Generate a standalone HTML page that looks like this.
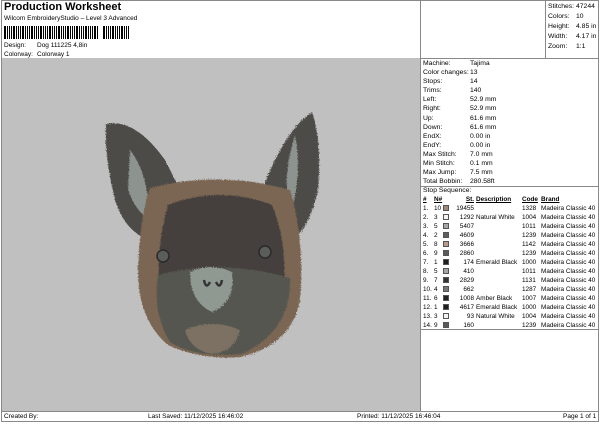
<!DOCTYPE html>
<html><head><meta charset="utf-8"><style>
*{margin:0;padding:0;box-sizing:border-box}
body{width:600px;height:424px;background:#fff;font-family:"Liberation Sans",Arial,sans-serif;font-size:7px;color:#000;position:relative;overflow:hidden}
.a{position:absolute;white-space:nowrap}
.ln{position:absolute;background:#888}
table{table-layout:fixed;border-collapse:collapse}
td{font-size:6.4px;padding:0;height:9px;line-height:9px;white-space:nowrap;overflow:hidden}
.sw{display:inline-block;width:6px;height:6px;border:1px solid #555;vertical-align:-1px}
</style></head><body>
<div class="ln" style="left:1px;top:0;width:598px;height:1px"></div>
<div class="ln" style="left:1px;top:0;width:1px;height:422px"></div>
<div class="ln" style="left:598px;top:0;width:1px;height:422px"></div>
<div class="ln" style="left:1px;top:421px;width:598px;height:1px"></div>
<div class="a" style="left:4px;top:1px;font-size:11px;font-weight:bold">Production Worksheet</div>
<div class="a" style="left:4px;top:15px;font-size:6.5px">Wilcom EmbroideryStudio – Level 3 Advanced</div>
<div class="a" style="left:4px;top:26px;width:126px;height:13px;background:repeating-linear-gradient(90deg,#000 0 2px,#fff 2px 3px,#000 3px 4px,#fff 4px 5px,#000 5px 6px,#fff 6px 7px,#000 7px 8px,#fff 8px 9px)"></div>
<div class="a" style="left:99px;top:26px;width:4px;height:13px;background:#fff"></div>
<div class="a" style="left:4px;top:42px;font-size:6.5px">Design:</div>
<div class="a" style="left:37px;top:42px;font-size:6.5px">Dog 111225 4,8in</div>
<div class="a" style="left:4px;top:51px;font-size:6.5px">Colorway:</div>
<div class="a" style="left:37px;top:51px;font-size:6.5px">Colorway 1</div>
<div class="a" style="left:2px;top:58px;width:418px;height:353px;background:#c0c0c0"></div>
<div class="ln" style="left:420px;top:0;width:1px;height:412px"></div>
<div class="ln" style="left:545px;top:0;width:1px;height:58px"></div>
<div class="ln" style="left:420px;top:58px;width:179px;height:1px"></div>
<div class="ln" style="left:420px;top:186px;width:179px;height:1px"></div>
<div class="ln" style="left:420px;top:329px;width:179px;height:1px"></div>
<div class="ln" style="left:1px;top:411px;width:598px;height:1px"></div>
<div class="a" style="left:548px;top:2px;line-height:10px;font-size:6.8px">Stitches:<br>Colors:<br>Height:<br>Width:<br>Zoom:</div>
<div class="a" style="left:576px;top:2px;line-height:10px;font-size:6.8px">47244<br>10<br>4.85 in<br>4.17 in<br>1:1</div>
<div class="a" style="left:423px;top:59px;line-height:9.1px;font-size:6.8px">Machine:<br>Color changes:<br>Stops:<br>Trims:<br>Left:<br>Right:<br>Up:<br>Down:<br>EndX:<br>EndY:<br>Max Stitch:<br>Min Stitch:<br>Max Jump:<br>Total Bobbin:</div>
<div class="a" style="left:470px;top:59px;line-height:9.1px;font-size:6.8px">Tajima<br>13<br>14<br>140<br>52.9 mm<br>52.9 mm<br>61.6 mm<br>61.6 mm<br>0.00 in<br>0.00 in<br>7.0 mm<br>0.1 mm<br>7.5 mm<br>280.58ft</div>
<div class="a" style="left:423px;top:187px;font-size:6.8px">Stop Sequence:</div>
<table class="a" style="left:423px;top:195px;width:175px">
<colgroup><col style="width:11px"><col style="width:9px"><col style="width:9px"><col style="width:22px"><col style="width:48px"><col style="width:19px"><col style="width:57px"></colgroup>
<tr style="font-weight:bold;text-decoration:underline"><td>#</td><td>N#</td><td></td><td style="text-align:right">St.</td><td style="padding-left:2px">Description</td><td>Code</td><td>Brand</td></tr>
<tr><td>1.</td><td>10</td><td><span class="sw" style="background:#a0897a"></span></td><td style="text-align:right">19455</td><td></td><td>1328</td><td>Madeira Classic 40</td></tr>
<tr><td>2.</td><td>3</td><td><span class="sw" style="background:#f4f4f4"></span></td><td style="text-align:right">1292</td><td style="padding-left:2px">Natural White</td><td>1004</td><td>Madeira Classic 40</td></tr>
<tr><td>3.</td><td>5</td><td><span class="sw" style="background:#a4a7a6"></span></td><td style="text-align:right">5407</td><td></td><td>1011</td><td>Madeira Classic 40</td></tr>
<tr><td>4.</td><td>2</td><td><span class="sw" style="background:#5e5e5e"></span></td><td style="text-align:right">4609</td><td></td><td>1239</td><td>Madeira Classic 40</td></tr>
<tr><td>5.</td><td>8</td><td><span class="sw" style="background:#b89b88"></span></td><td style="text-align:right">3666</td><td></td><td>1142</td><td>Madeira Classic 40</td></tr>
<tr><td>6.</td><td>9</td><td><span class="sw" style="background:#5a5a5a"></span></td><td style="text-align:right">2860</td><td></td><td>1239</td><td>Madeira Classic 40</td></tr>
<tr><td>7.</td><td>1</td><td><span class="sw" style="background:#1e1e1e"></span></td><td style="text-align:right">174</td><td style="padding-left:2px">Emerald Black</td><td>1000</td><td>Madeira Classic 40</td></tr>
<tr><td>8.</td><td>5</td><td><span class="sw" style="background:#a4a7a6"></span></td><td style="text-align:right">410</td><td></td><td>1011</td><td>Madeira Classic 40</td></tr>
<tr><td>9.</td><td>7</td><td><span class="sw" style="background:#3a3330"></span></td><td style="text-align:right">2829</td><td></td><td>1131</td><td>Madeira Classic 40</td></tr>
<tr><td>10.</td><td>4</td><td><span class="sw" style="background:#777"></span></td><td style="text-align:right">662</td><td></td><td>1287</td><td>Madeira Classic 40</td></tr>
<tr><td>11.</td><td>6</td><td><span class="sw" style="background:#222"></span></td><td style="text-align:right">1008</td><td style="padding-left:2px">Amber Black</td><td>1007</td><td>Madeira Classic 40</td></tr>
<tr><td>12.</td><td>1</td><td><span class="sw" style="background:#1e1e1e"></span></td><td style="text-align:right">4617</td><td style="padding-left:2px">Emerald Black</td><td>1000</td><td>Madeira Classic 40</td></tr>
<tr><td>13.</td><td>3</td><td><span class="sw" style="background:#f4f4f4"></span></td><td style="text-align:right">93</td><td style="padding-left:2px">Natural White</td><td>1004</td><td>Madeira Classic 40</td></tr>
<tr><td>14.</td><td>9</td><td><span class="sw" style="background:#5a5a5a"></span></td><td style="text-align:right">160</td><td></td><td>1239</td><td>Madeira Classic 40</td></tr>
</table>
<div class="a" style="left:4px;top:413px;font-size:6.5px">Created By:</div>
<div class="a" style="left:148px;top:413px;font-size:6.5px">Last Saved: 11/12/2025 16:46:02</div>
<div class="a" style="left:357px;top:413px;font-size:6.5px">Printed: 11/12/2025 16:46:04</div>
<div class="a" style="left:563px;top:413px;font-size:6.5px">Page 1 of 1</div>
<svg class="a" style="left:0;top:0" width="420" height="411" viewBox="0 0 420 411">
<defs><filter id="n"><feTurbulence type="fractalNoise" baseFrequency="0.9" numOctaves="2" result="t"/><feDisplacementMap in="SourceGraphic" in2="t" scale="4"/></filter></defs>
<g filter="url(#n)">
<path d="M106,124 Q135,118 165,160 L180,190 L150,240 Q125,232 115,200 Q104,155 106,124Z" fill="#4e4c47"/>
<path d="M312,112 Q322,140 318,190 Q310,225 295,238 L262,190 Q285,130 312,112Z" fill="#4e4c47"/>
<path d="M130,150 Q148,172 150,220 Q136,212 128,190Z" fill="#8d948f"/>
<path d="M295,135 Q302,170 292,210 Q280,185 295,135Z" fill="#8d948f"/>
<path d="M150,188 Q220,170 290,190 Q305,240 300,300 Q292,345 240,357 Q200,360 168,345 Q138,320 138,270 Q140,215 150,188Z" fill="#7a6653"/>
<path d="M168,205 Q220,185 272,205 Q290,250 282,300 L160,300 Q155,250 168,205Z" fill="#45413c"/>
<path d="M158,275 Q220,258 290,278 Q292,330 242,354 Q195,358 170,342 Q152,312 158,275Z" fill="#55574f"/>
<path d="M190,272 Q210,262 232,272 Q236,302 212,312 Q190,302 190,272Z" fill="#8f9891"/>
<path d="M185,330 Q212,318 240,330 Q235,352 212,354 Q190,350 185,330Z" fill="#7b7163"/>
</g>
<circle cx="163" cy="256" r="6" fill="#5b5d58" stroke="#2a2a2a" stroke-width="1.5"/>
<circle cx="265" cy="252" r="6" fill="#5b5d58" stroke="#2a2a2a" stroke-width="1.5"/>
<path d="M204,280 Q206,290 210,282 M216,282 Q220,290 222,280" stroke="#333" stroke-width="2.5" fill="none"/>
</svg>
</body></html>
